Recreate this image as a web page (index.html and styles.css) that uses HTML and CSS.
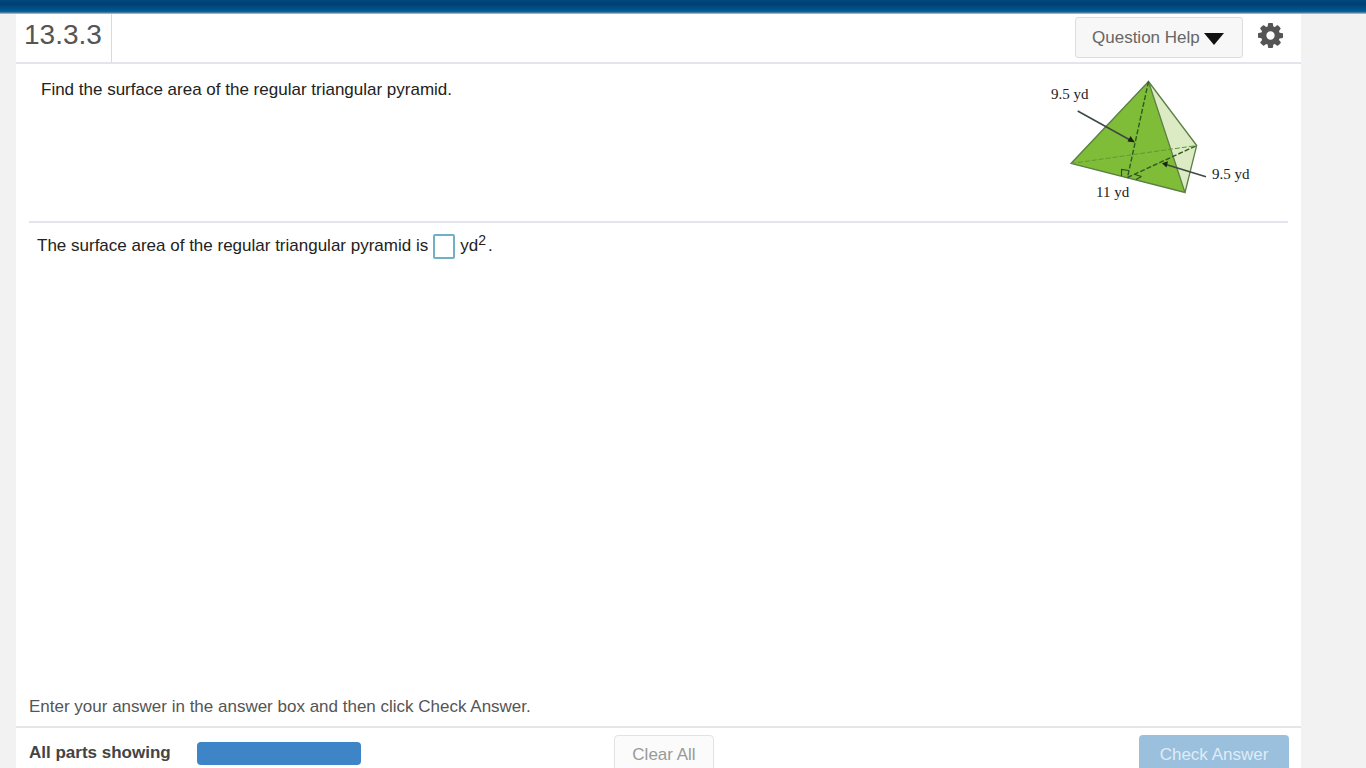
FILE: index.html
```html
<!DOCTYPE html>
<html lang="en">
<head>
<meta charset="utf-8">
<title>13.3.3</title>
<link rel="stylesheet" href="styles.css">
</head>
<body>
<div class="topbar"></div>
<main class="card">
  <header class="head">
    <div class="qnum">13.3.3</div>
    <div class="tools">
      <button class="help">Question Help<svg class="caret" viewBox="0 0 20 12"><path d="M0 0H20L10 12Z"/></svg></button>
      <svg class="gear" viewBox="128 128 1536 1536"><path d="M1152 896q0-106-75-181t-181-75-181 75-75 181 75 181 181 75 181-75 75-181zm512-109v222q0 12-8 23t-20 13l-185 28q-19 54-39 91 35 50 107 138 10 12 10 25t-9 23q-27 37-99 108t-94 71q-12 0-26-9l-138-108q-44 23-91 38-16 136-29 186-7 28-36 28h-222q-14 0-24.5-8.5t-11.5-21.5l-28-184q-49-16-90-37l-141 107q-10 9-25 9-14 0-25-11-126-114-165-168-7-10-7-23 0-12 8-23 15-21 51-66.5t54-70.5q-27-50-41-99l-183-27q-13-2-21-12.5t-8-23.5v-222q0-12 8-23t19-13l186-28q14-46 39-92-40-57-107-138-10-12-10-24 0-10 9-23 26-36 98.5-107.5t94.5-71.5q13 0 26 10l138 107q44-23 91-38 16-136 29-186 7-28 36-28h222q14 0 24.5 8.5t11.5 21.5l28 184q49 16 90 37l142-107q9-9 24-9 13 0 25 10 129 119 165 170 7 8 7 22 0 12-8 23-15 21-51 66.5t-54 70.5q26 50 41 98l183 28q13 2 21 12.5t8 23.5z"/></svg>
    </div>
  </header>
  <section class="question">
    <p class="qtext">Find the surface area of the regular triangular pyramid.</p>
    <svg class="figure" viewBox="1045 75 215 130">
      <polygon class="back" points="1147.5,81.5 1195.7,145.5 1184,192.5"/>
      <polygon class="front" points="1147.5,81.5 1070,163.5 1184,192.5"/>
      <path class="edge" d="M1147.5 81.5 1070 163.5 1184 192.5ZM1147.5 81.5 1195.7 145.5 1184 192.5"/>
      <path class="dash" d="M1147.5 81.5 1126.5 177.5M1126.5 177.5 1195.7 145.5"/>
      <path class="dash thin" d="M1070 163.5 1195.7 145.5"/>
      <path class="mark" d="M1120.5 176V169.5L1127.8 170.5M1135 179.5 1140.5 176.5M1134 174.5 1140.5 176.5"/>
      <path class="arrow" d="M1076.7 111 1129 140M1205 176.7 1165 164.5"/>
      <path class="head-a" d="M1134 142.5 1126.5 141.5 1129.5 136ZM1161 163.3 1167 161.3 1165.5 167.5Z"/>
      <text x="1050" y="99">9.5 yd</text>
      <text x="1211" y="179">9.5 yd</text>
      <text x="1095" y="197">11 yd</text>
    </svg>
  </section>
  <section class="answer">
    <span>The surface area of the regular triangular pyramid is</span>
    <span class="box"></span>
    <span>yd<sup class="sq">2</sup><span class="dot">.</span></span>
  </section>
  <p class="hint">Enter your answer in the answer box and then click Check Answer.</p>
  <footer class="foot">
    <strong class="parts">All parts showing</strong>
    <div class="progress"></div>
    <button class="clear">Clear All</button>
    <button class="check">Check Answer</button>
  </footer>
</main>
</body>
</html>
```
FILE: styles.css
```css
* { box-sizing: border-box; }
html, body { height: 100%; }
body {
  margin: 0;
  background: #f2f2f2;
  font-family: "Liberation Sans", Arial, sans-serif;
  overflow: hidden;
  display: flex;
  flex-direction: column;
}
.topbar {
  flex: none;
  height: 14px;
  background: linear-gradient(#004a80 0, #003f70 4px, #005a96 11px, #0a6aa5 12px, #8a8f94 13px, #c9c9c9 14px);
}
.card {
  flex: 1;
  width: 1285px;
  margin-left: 16px;
  background: #fff;
  display: flex;
  flex-direction: column;
  min-height: 0;
}
.head {
  flex: none;
  height: 50px;
  display: flex;
  justify-content: space-between;
  border-bottom: 2px solid #e4e4ee;
}
.qnum {
  width: 96px;
  padding: 4px 0 0 8px;
  font-size: 28px;
  line-height: 34px;
  color: #555;
  border-right: 1px solid #d8d8e2;
}
.tools { display: flex; align-items: flex-start; }
.help {
  width: 168px;
  height: 41px;
  margin-top: 3px;
  padding: 0 0 0 16px;
  display: flex;
  align-items: center;
  font: 17px "Liberation Sans", Arial, sans-serif;
  color: #666;
  background: #f7f7f7;
  border: 1px solid #ddd;
  border-radius: 3px;
}
.caret { width: 20px; height: 12px; margin-left: 4px; margin-top: 2px; fill: #111; }
.gear { width: 25px; height: 25px; margin: 9px 18px 0 15px; fill: #555; }
.question {
  flex: none;
  height: 159px;
  margin: 0 13px;
  padding: 0 27px 0 12px;
  display: flex;
  justify-content: space-between;
  border-bottom: 2px solid #e4e4ee;
}
.qtext { margin: 15px 0 0; font-size: 17px; line-height: 22px; color: #222; }
.figure { width: 215px; height: 130px; margin-top: 11px; }
.front { fill: #7fbc37; }
.back { fill: #dcebc4; }
.edge { fill: none; stroke: #5b7f45; stroke-width: 1.3; }
.dash { fill: none; stroke: #2f5a20; stroke-width: 1.4; stroke-dasharray: 5 2; }
.thin { stroke: #5f9a38; stroke-width: 1; }
.mark { fill: none; stroke: #2f4a22; stroke-width: 1.1; }
.arrow { fill: none; stroke: #3e4a44; stroke-width: 1.6; }
.head-a { fill: #1c241a; }
.figure text { font: 15px "Liberation Serif", "Times New Roman", serif; fill: #222; }
.answer {
  flex: none;
  height: 472px;
  padding: 8px 0 0 21px;
  display: flex;
  align-items: flex-start;
  font-size: 17px;
  line-height: 30px;
  color: #222;
}
.box {
  width: 22px;
  height: 25px;
  margin: 3px 5px 0 5px;
  border: 2px solid #6fb0c4;
  border-radius: 2px;
}
.sq { font-size: 14px; line-height: 0; vertical-align: 6px; }
.dot { margin-left: 2px; }
.hint {
  flex: none;
  margin: 0;
  height: 33px;
  padding: 0 0 0 13px;
  font-size: 17px;
  line-height: 24px;
  color: #555;
  border-bottom: 2px solid #e6e6e6;
}
.foot {
  flex: 1;
  min-height: 0;
  padding-left: 13px;
  display: flex;
  align-items: flex-start;
  position: relative;
  overflow: hidden;
}
.parts { width: 168px; margin-top: 13px; font-size: 17px; line-height: 24px; color: #444; }
.progress { width: 164px; height: 23px; margin-top: 14px; background: #3d85c6; border-radius: 4px; }
.clear, .check {
  height: 44px;
  margin-top: 7px;
  border-radius: 4px;
  font: 17px "Liberation Sans", Arial, sans-serif;
  padding: 0 0 4px;
}
.clear { width: 100px; margin-left: 253px; background: #fbfbfb; border: 1px solid #e2e2e2; color: #999; }
.check { width: 150px; margin-left: 425px; background: #9bc0de; border: 0; color: #dfecf6; }
```
